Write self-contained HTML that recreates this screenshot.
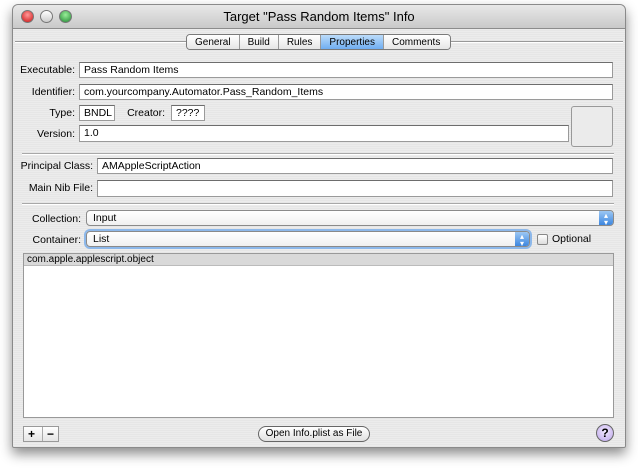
<!DOCTYPE html>
<html><head><style>
*{box-sizing:border-box;margin:0;padding:0}
body{width:638px;height:471px;background:#fff;font-family:"Liberation Sans",sans-serif;font-size:10.5px;color:#000;position:relative;overflow:hidden}
.win{position:absolute;left:12px;top:4px;width:614px;height:444px;background:repeating-linear-gradient(#ececec 0 1px,#e6e6e6 1px 2px);border:1px solid #8a8a8a;border-radius:6px 6px 2px 2px;box-shadow:0 6px 12px rgba(0,0,0,.45)}
.title{position:absolute;left:0;top:0;width:100%;height:24px;background:linear-gradient(#e8e8e8,#c9c9c9);border-bottom:1px solid #8c8c8c;border-radius:6px 6px 0 0;text-align:center;font-size:13px;line-height:24px}
.b{position:absolute;top:5px;width:13px;height:13px;border-radius:50%;border:1px solid #777}
.a{position:absolute}
.lbl{position:absolute;text-align:right}
.f{position:absolute;background:#fff;border:1px solid #9a9a9a;border-top-color:#6d6d6d;padding-left:4px;line-height:14px}
.sep{position:absolute;left:9px;width:592px;height:2px;border-top:1px solid #a8a8a8;border-bottom:1px solid #fff}
.pop{position:absolute;background:linear-gradient(#fff,#f0f0f0);border:1px solid #8a8a8a;border-radius:4px;padding-left:6px;line-height:14px}
.arr{position:absolute;right:0;top:0;width:14px;height:100%;background:linear-gradient(#9cc7f3,#3d87e0);border-radius:0 3px 3px 0;color:#fff;text-align:center;font-size:8px;line-height:7px;padding-top:1px}
.tab{display:inline-block;padding:0 8px;line-height:15px;border-right:1px solid #999;background:linear-gradient(#fff,#e4e4e4)}
</style></head><body>
<div class="win">
<div class="title">Target "Pass Random Items" Info</div>
<div class="b" style="left:8px;background:radial-gradient(circle at 50% 35%,#f99,#c11)"></div>
<div class="b" style="left:27px;background:linear-gradient(#fff,#ccc)"></div>
<div class="b" style="left:46px;background:radial-gradient(circle at 50% 35%,#9e9,#283)"></div>
<div class="a" style="left:2px;top:36px;width:608px;height:2px;border-top:1px solid #999;border-bottom:1px solid #fff"></div>
<div class="a" style="left:173px;top:29px;height:16px;border:1px solid #7a7a7a;border-radius:4px;overflow:hidden;white-space:nowrap;font-size:10px"><span class="tab">General</span><span class="tab">Build</span><span class="tab">Rules</span><span class="tab" style="background:linear-gradient(#bcdcfa,#6aaaf0)">Properties</span><span class="tab" style="border:0;padding-right:10px">Comments</span></div>
<div class="lbl" style="left:4px;width:58px;top:59px">Executable:</div><div class="f" style="left:66px;top:57px;width:534px;height:16px">Pass Random Items</div>
<div class="lbl" style="left:4px;width:58px;top:81px">Identifier:</div><div class="f" style="left:66px;top:79px;width:534px;height:16px">com.yourcompany.Automator.Pass_Random_Items</div>
<div class="lbl" style="left:4px;width:58px;top:102px">Type:</div><div class="f" style="left:66px;top:100px;width:36px;height:16px">BNDL</div>
<div class="lbl" style="left:110px;width:42px;top:102px">Creator:</div><div class="f" style="left:158px;top:100px;width:34px;height:16px">????</div>
<div class="a" style="left:558px;top:101px;width:42px;height:41px;border:1px solid #999;border-radius:3px;background:#ebebeb"></div>
<div class="lbl" style="left:4px;width:58px;top:123px">Version:</div><div class="f" style="left:66px;top:120px;width:490px;height:17px">1.0</div>
<div class="sep" style="top:148px"></div>
<div class="lbl" style="left:4px;width:76px;top:155px">Principal Class:</div><div class="f" style="left:84px;top:153px;width:516px;height:16px">AMAppleScriptAction</div>
<div class="lbl" style="left:4px;width:76px;top:177px">Main Nib File:</div><div class="f" style="left:84px;top:175px;width:516px;height:17px"></div>
<div class="sep" style="top:198px"></div>
<div class="lbl" style="left:4px;width:64px;top:208px">Collection:</div><div class="pop" style="left:73px;top:205px;width:528px;height:16px">Input<div class="arr">▴<br>▾</div></div>
<div class="lbl" style="left:4px;width:64px;top:229px">Container:</div><div class="pop" style="left:73px;top:226px;width:444px;height:16px;box-shadow:0 0 0 2px #8db8ea">List<div class="arr">▴<br>▾</div></div>
<div class="a" style="left:524px;top:229px;width:11px;height:11px;border:1px solid #888;border-radius:2px;background:linear-gradient(#fff,#ddd)"></div>
<div class="a" style="left:539px;top:228px">Optional</div>
<div class="a" style="left:10px;top:248px;width:591px;height:165px;background:#fff;border:1px solid #999"><div style="height:12px;background:#d9d9d9;border-bottom:1px solid #bbb;padding-left:3px;line-height:12px;font-size:10px">com.apple.applescript.object</div></div>
<div class="a" style="left:10px;top:421px;width:36px;height:16px;border:1px solid #999;background:linear-gradient(#fff,#e5e5e5);font-weight:bold;font-size:12px;line-height:14px"><span style="position:absolute;left:4px">+</span><span style="position:absolute;left:18px;top:0;width:1px;height:14px;background:#aaa"></span><span style="position:absolute;left:23px">−</span></div>
<div class="a" style="left:245px;top:421px;width:112px;height:16px;border:1px solid #666;border-radius:8px;background:linear-gradient(#fff,#e0e0e0);text-align:center;line-height:14px;font-size:10px">Open Info.plist as File</div>
<div class="a" style="left:583px;top:419px;width:18px;height:18px;border:1px solid #666;border-radius:50%;background:radial-gradient(circle at 50% 40%,#f3eaff,#b9a3e8);text-align:center;font-weight:bold;font-size:12px;line-height:16px">?</div>
</div>
</body></html>
